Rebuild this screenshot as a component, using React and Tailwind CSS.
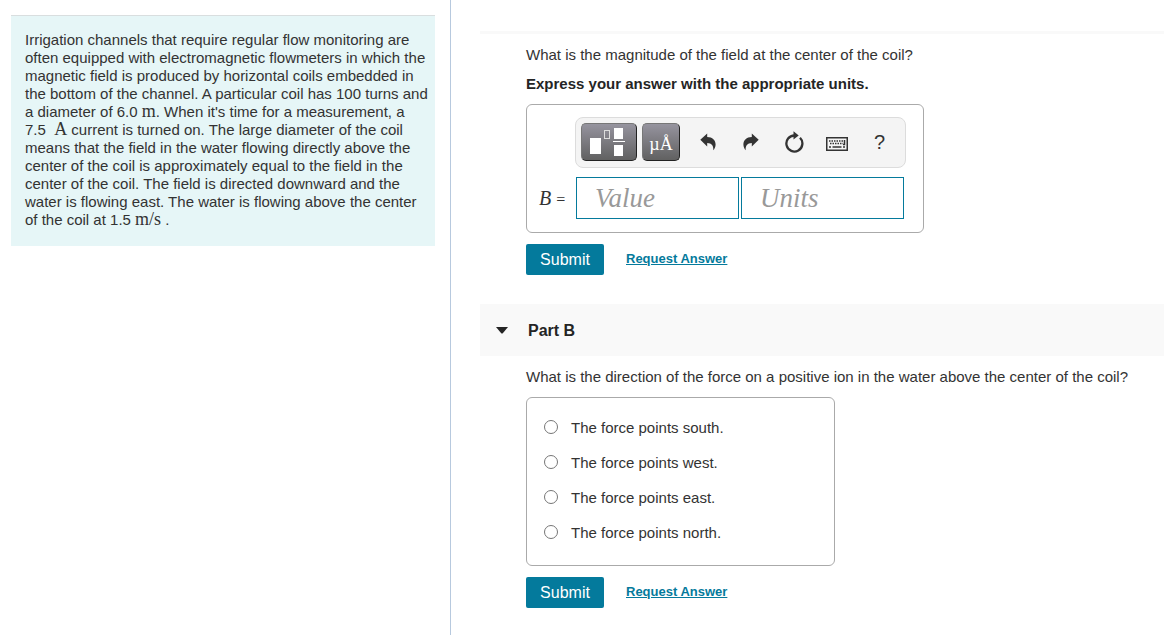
import React from 'react'

const choices = ['south', 'west', 'east', 'north']

const Unit = ({ children }) => (
    <span className="font-['Liberation_Serif',serif] text-lg leading-0">{children}</span>
)

const Problem = () => (
    <section className="mt-[15px] mr-[15px] ml-[11px] border-t border-[#d9dedf] bg-[#e6f6f7] pt-[15px] pr-1 pb-[17px] pl-[14px]">
        <p className="text-[15px] leading-[18px] text-[#333]">
            Irrigation channels that require regular flow monitoring are often equipped with
            electromagnetic flowmeters in which the magnetic field is produced by horizontal coils
            embedded in the bottom of the channel. A particular coil has 100 turns and a diameter
            of 6.0 <Unit>m</Unit>. When it's time for a measurement, a{' '}
            <span className="whitespace-nowrap">7.5 &nbsp;<Unit>A</Unit></span> current is turned on. The
            large diameter of the coil means that the field in the water flowing directly above
            the center of the coil is approximately equal to the field in the center of the coil.
            The field is directed downward and the water is flowing east. The water is flowing
            above the center of the coil at 1.5 <Unit>m/s</Unit> .
        </p>
    </section>
)

const TemplatesIcon = () => (
    <svg width="40" height="30" viewBox="0 0 40 30" fill="#fff" className="shrink-0" aria-hidden="true">
        <rect x="1" y="11" width="11" height="16" />
        <rect x="15.500" y="3.500" width="5" height="8" fill="none" stroke="#ddd" />
        <rect x="25" y="1" width="9" height="11" />
        <rect x="24" y="14" width="12" height="1" />
        <rect x="25" y="18" width="9" height="11" />
    </svg>
)

const ArrowIcon = ({ flip }) => (
    <svg width="16" height="18" viewBox="0 0 16 18" className={flip ? '-scale-x-100' : ''} fill="#333" aria-hidden="true">
        <path d="M.3 6.800 7.200 .5V4C12.500 4.200 15.600 7 15.600 11.500 15.600 14 14.500 16 13.300 17.300 13.600 12.500 11.800 10.300 7.200 10V13.400Z" />
    </svg>
)

const ResetIcon = () => (
    <svg width="20" height="22" viewBox="0 0 20 22" aria-hidden="true">
        <path d="M16 6.800A8 8 0 1 1 10.500 4.500" fill="none" stroke="#333" strokeWidth="2.300" />
        <path d="M9.500 .3 14.700 4.500 9.500 8.500Z" fill="#333" />
    </svg>
)

const KeyboardIcon = () => (
    <svg width="22" height="14" viewBox="0 0 22 14" fill="none" stroke="#333" aria-hidden="true">
        <rect x=".75" y=".75" width="20.500" height="12.500" strokeWidth="1.500" />
        <path d="M3 4H17M4 6.500H17" strokeWidth="1.500" strokeDasharray="1.500 1" />
        <path d="M3 10H5M6.500 10H15.500M17 10H19M18.500 3V7.500H17" strokeWidth="1.500" />
    </svg>
)

const toolKey =
    'flex h-[38px] shrink-0 items-center justify-center rounded-[5px] border border-[#222] border-t-[#777] border-l-[#777] bg-linear-to-b from-[#96949f] to-[#616161]'
const tool = 'flex h-[38px] w-[43px] items-center justify-center text-[#333]'

const Toolbar = () => (
    <div className="ml-12 flex h-[51px] items-start rounded-lg border border-[#dcdcdc] bg-[#f4f4f4] pt-[5px] pl-[5px]">
        <button type="button" aria-label="Templates" className={`${toolKey} w-14`}><TemplatesIcon /></button>
        <button type="button" aria-label="Units" className={`${toolKey} mr-[6px] ml-[5px] w-[38px] pt-1 font-['Liberation_Serif',serif] text-lg text-white`}>
            µÅ
        </button>
        <button type="button" aria-label="Undo" className={tool}><ArrowIcon /></button>
        <button type="button" aria-label="Redo" className={tool}><ArrowIcon flip /></button>
        <button type="button" aria-label="Reset" className={tool}><ResetIcon /></button>
        <button type="button" aria-label="Keyboard shortcuts" className={`${tool} pt-1`}><KeyboardIcon /></button>
        <button type="button" aria-label="Help" className={`${tool} text-xl`}>?</button>
    </div>
)

const field =
    "h-[42px] w-[163px] border border-[#047a9c] bg-white px-[18px] font-['Liberation_Serif',serif] text-[27px] text-[#333] italic placeholder:text-[#999]"

const Actions = () => (
    <div className="mt-[11px] flex items-start">
        <button type="button" className="h-[31px] w-[78px] rounded-xs bg-[#047a9c] text-base text-white">Submit</button>
        <a href="#" className="ml-[22px] pt-[5px] text-[13px] leading-5 font-bold text-[#047a9c] underline">Request Answer</a>
    </div>
)

const PartA = () => (
    <form className="border-t-3 border-[#f9f9f9] pt-[11px] pl-[46px]">
        <p className="text-[15px] leading-5">What is the magnitude of the field at the center of the coil?</p>
        <p className="mt-[9px] text-[15px] leading-5 font-bold text-[#252525]">Express your answer with the appropriate units.</p>
        <div className="mt-[10px] h-[129px] w-[398px] rounded-md border border-[#aaa] py-3 pr-[17px]">
            <Toolbar />
            <div className="mt-[9px] flex items-center">
                <label htmlFor="value" className="w-[49px] pl-3 font-['Liberation_Serif',serif] text-xl">
                    <i>B</i> <span className="text-base">=</span>
                </label>
                <input id="value" placeholder="Value" className={field} />
                <input aria-label="Units" placeholder="Units" className={`${field} ml-0.5`} />
            </div>
        </div>
        <Actions />
    </form>
)

const PartB = () => (
    <form className="mt-[29px]">
        <h2 className="flex h-[52px] items-center bg-[#f9f9f9] pl-4 text-base font-bold text-[#252525]">
            <svg width="12" height="7" viewBox="0 0 12 7" fill="#252525" className="mr-5" aria-hidden="true">
                <path d="M0 0H12L7 6Q6 7 5 6Z" />
            </svg>
            <span className="pt-0.5">Part B</span>
        </h2>
        <div className="pt-[11px] pl-[46px]">
            <p className="text-[15px] leading-5">
                What is the direction of the force on a positive ion in the water above the center of the coil?
            </p>
            <fieldset className="mt-[10px] h-[169px] w-[309px] rounded-md border border-[#aaa] px-[17px] pt-[11px]">
                {choices.map((c) => (
                    <label key={c} className="flex h-[35px] items-center text-[15px]">
                        <input type="radio" name="direction" className="mr-[13px] size-[14px] appearance-none rounded-full border border-[#767676] bg-white checked:border-4" />
                        <span className="pt-1">The force points {c}.</span>
                    </label>
                ))}
            </fieldset>
            <Actions />
        </div>
    </form>
)

const App = () => {
    return (
        <div className="grid min-h-screen grid-cols-[451fr_713fr] bg-white font-['Liberation_Sans',Arial,sans-serif] text-[#333]">
            <div className="border-r border-[#b7c9de]">
                <Problem />
            </div>
            <main className="min-w-0 pt-[31px] pl-[29px]">
                <PartA />
                <PartB />
            </main>
        </div>
    )
}

export default App
